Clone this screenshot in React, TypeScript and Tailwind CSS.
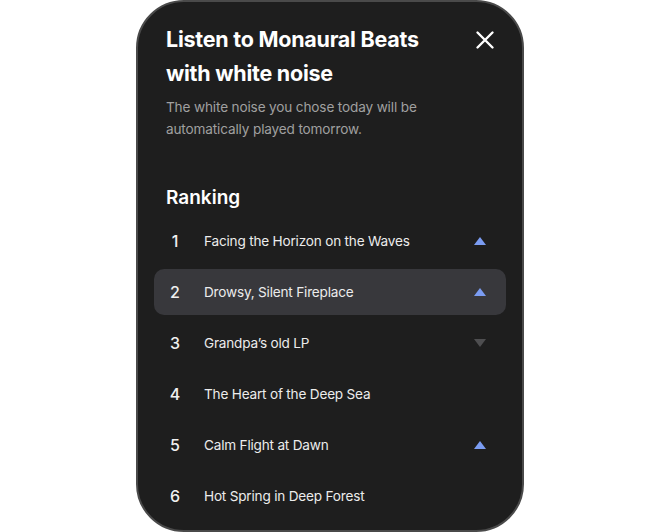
import { FunctionComponent } from "react";

type Trend = "up" | "down" | null;

const items: { rank: number; title: string; trend: Trend; active?: boolean }[] = [
  { rank: 1, title: "Facing the Horizon on the Waves", trend: "up" },
  { rank: 2, title: "Drowsy, Silent Fireplace", trend: "up", active: true },
  { rank: 3, title: "Grandpa’s old LP", trend: "down" },
  { rank: 4, title: "The Heart of the Deep Sea", trend: null },
  { rank: 5, title: "Calm Flight at Dawn", trend: "up" },
  { rank: 6, title: "Hot Spring in Deep Forest", trend: null },
];

const Triangle: FunctionComponent<{ trend: Trend }> = ({ trend }) => {
  if (!trend) return <span className="w-3 h-2" />;
  return (
    <svg width="12" height="8" viewBox="0 0 12 8">
      {trend === "up" ? (
        <polygon points="6,0 12,8 0,8" fill="#7b9cf2" />
      ) : (
        <polygon points="0,0 12,0 6,8" fill="#4e4e50" />
      )}
    </svg>
  );
};

const App: FunctionComponent = () => {
  return (
    <div className="w-[660px] h-[532px] bg-white font-['Inter',sans-serif] overflow-hidden">
      <div className="mx-auto w-[388px] h-[532px] rounded-[48px] border-2 border-[#4a4a4a] bg-[#1e1e1e] overflow-hidden pt-[20px]">
        <div className="flex justify-between px-[28px]">
          <h1 className="text-[21.5px] leading-[34px] font-bold text-white tracking-[-0.25px]">
            Listen to Monaural Beats
            <br />
            with white noise
          </h1>
          <button className="mt-[8px] h-5 w-5 -mr-[1px]">
            <svg width="20" height="20" viewBox="0 0 20 20" fill="none" stroke="white" strokeWidth="2.4" strokeLinecap="round">
              <path d="M2.5 2.5 L17.5 17.5 M17.5 2.5 L2.5 17.5" />
            </svg>
          </button>
        </div>
        <p className="mt-[6px] px-[28px] text-[13.6px] leading-[22px] text-[#a0a0a0] tracking-[-0.15px]">
          The white noise you chose today will be
          <br />
          automatically played tomorrow.
        </p>
        <h2 className="mt-[44px] px-[28px] text-[19px] leading-[28px] font-semibold text-white">Ranking</h2>
        <div className="mt-[6px] mx-[16px] flex flex-col gap-[5px]">
          {items.map((item) => (
            <div
              key={item.rank}
              className={`flex items-center h-[46px] pl-[12px] pr-[20px] rounded-[10px] ${
                item.active ? "bg-[#38383c]" : ""
              }`}
            >
              <span className="w-[18px] text-center text-[16px] font-medium text-[#f0f0f0]">{item.rank}</span>
              <span className="ml-[20px] flex-1 text-[13.6px] leading-[20px] text-[#ececec] tracking-[-0.2px]">{item.title}</span>
              <Triangle trend={item.trend} />
            </div>
          ))}
        </div>
      </div>
    </div>
  );
};

export default App;
